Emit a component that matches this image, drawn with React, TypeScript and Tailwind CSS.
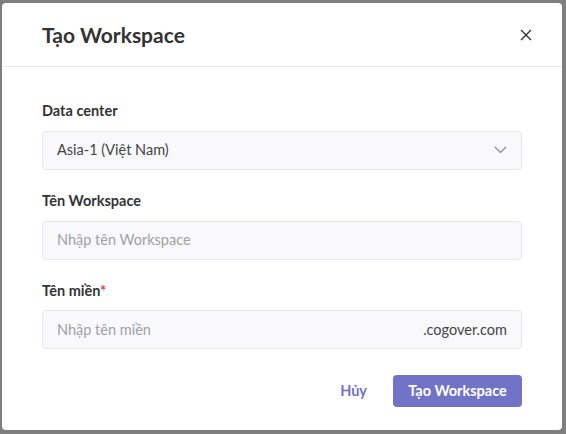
import React from "react";

export default function App() {
  const input = "h-[39px] w-full rounded-[4px] border border-[#e6e6ec] bg-[#f9f9fc] px-[14px] flex items-center text-[14.5px]";
  return (
    <div className="w-[566px] h-[434px] bg-[#7f7f7f] pl-[2px] pr-[4px] pt-[3px] pb-[4px]" style={{ fontFamily: "Lato, 'Noto Sans', sans-serif" }}>
      <div className="h-full bg-white rounded-[4px] flex flex-col">
        <div className="h-[64px] border-b border-[#e8e8ec] flex items-center justify-between pl-[40px] pr-[30px]">
          <div className="text-[21px] font-bold text-[#333]">Tạo Workspace</div>
          <svg width="12" height="12" viewBox="0 0 12 12" stroke="#333" strokeWidth="1.4"><path d="M1 1L11 11M11 1L1 11" /></svg>
        </div>
        <div className="px-[40px] pt-[33px] flex flex-col">
          <div className="text-[14.5px] font-bold text-[#333] mb-[9px]">Data center</div>
          <div className={input + " justify-between text-[#444]"}>
            <span>Asia-1 (Việt Nam)</span>
            <svg width="13" height="8" viewBox="0 0 13 8" fill="none" stroke="#888" strokeWidth="1.2"><path d="M1 1l5.5 5.5L12 1" /></svg>
          </div>
          <div className="text-[14.5px] font-bold text-[#333] mt-[20px] mb-[9px]">Tên Workspace</div>
          <div className={input + " text-[#a0a0a8]"}>Nhập tên Workspace</div>
          <div className="text-[14.5px] font-bold text-[#333] mt-[20px] mb-[9px]">Tên miền<span className="text-[#e53935]">*</span></div>
          <div className={input + " justify-between"}>
            <span className="text-[#a0a0a8]">Nhập tên miền</span>
            <span className="text-[#444]">.cogover.com</span>
          </div>
          <div className="flex justify-end items-center mt-[26px] gap-[26px]">
            <span className="text-[14.5px] font-bold text-[#6f72c7]">Hủy</span>
            <div className="h-[32px] w-[129px] rounded-[4px] bg-[#7173c8] text-white text-[14.5px] font-bold flex items-center justify-center">Tạo Workspace</div>
          </div>
        </div>
      </div>
    </div>
  );
}
